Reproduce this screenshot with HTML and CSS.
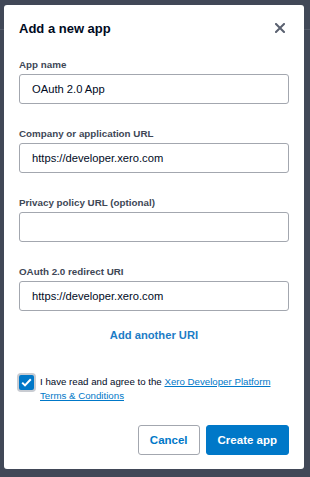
FILE: index.html
```html
<!DOCTYPE html>
<html lang="en">
<head>
    <meta charset="UTF-8">
    <meta name="viewport" content="width=device-width, initial-scale=1.0">
    <title>Add a new app</title>
    <link rel="stylesheet" href="styles.css">
</head>
<body>
    <div class="page-header"></div>

    <div class="modal">
        <div class="modal-header">
            <h1>Add a new app</h1>
            <button class="close-btn" aria-label="Close">
                <svg width="10" height="10" viewBox="0 0 10 10">
                    <path d="M1 1 L9 9 M9 1 L1 9" stroke="#5a6170" stroke-width="2" stroke-linecap="square"/>
                </svg>
            </button>
        </div>

        <div class="field">
            <label for="app-name">App name</label>
            <input id="app-name" type="text" value="OAuth 2.0 App">
        </div>

        <div class="field">
            <label for="company-url">Company or application URL</label>
            <input id="company-url" type="text" value="https://developer.xero.com">
        </div>

        <div class="field">
            <label for="privacy-url">Privacy policy URL (optional)</label>
            <input id="privacy-url" type="text" value="">
        </div>

        <div class="field">
            <label for="redirect-uri">OAuth 2.0 redirect URI</label>
            <input id="redirect-uri" type="text" value="https://developer.xero.com">
        </div>

        <button class="link-btn">Add another URI</button>

        <div class="agree">
            <span class="checkbox">
                <svg width="11" height="9" viewBox="0 0 11 9">
                    <path d="M1.2 4.6 L4 7.4 L9.8 1.3" stroke="#fff" stroke-width="2" fill="none"/>
                </svg>
            </span>
            <p>I have read and agree to the <a href="#">Xero Developer Platform Terms &amp; Conditions</a></p>
        </div>

        <div class="actions">
            <button class="btn btn-secondary">Cancel</button>
            <button class="btn btn-primary">Create app</button>
        </div>
    </div>
</body>
</html>
```

FILE: styles.css
```css
body {
    margin: 0;
    padding: 0;
    height: 477px;
    font-family: 'Liberation Sans', Arial, sans-serif;
    background: #414857;
    overflow: hidden;
}

.page-header {
    height: 29px;
    border-bottom: 1px solid #535a68;
}

.modal {
    position: fixed;
    top: 5px;
    left: 4px;
    width: 300px;
    height: 464px;
    box-sizing: border-box;
    padding: 0 15px;
    background: #fff;
    border-radius: 3px;
}

.modal-header {
    display: flex;
    justify-content: space-between;
    align-items: center;
    height: 46px;
}

.modal-header h1 {
    margin: 0;
    font-size: 13px;
    font-weight: bold;
    color: #000a1e;
}

.close-btn {
    display: flex;
    padding: 0;
    margin-right: 4px;
    border: none;
    background: none;
    cursor: pointer;
}

.field {
    display: flex;
    flex-direction: column;
    margin-top: 8px;
}

.field + .field {
    margin-top: 24px;
}

.field label {
    font-size: 9.8px;
    font-weight: bold;
    color: #404756;
    line-height: 12px;
    margin-bottom: 3px;
}

.field input {
    height: 30px;
    box-sizing: border-box;
    border: 1px solid #a3a7af;
    border-radius: 3px;
    padding: 0 12px;
    font-family: inherit;
    font-size: 11.2px;
    color: #000a1e;
}

.link-btn {
    display: block;
    height: 14px;
    margin: 17px auto 0;
    padding: 0;
    border: none;
    background: none;
    font-family: inherit;
    font-size: 11.2px;
    font-weight: bold;
    color: #1c7cc6;
    cursor: pointer;
}

.agree {
    display: flex;
    align-items: flex-start;
    margin-top: 33px;
}

.checkbox {
    display: flex;
    justify-content: center;
    align-items: center;
    flex-shrink: 0;
    width: 15px;
    height: 15px;
    background: #0078c8;
    border-radius: 2px;
    box-shadow: 0 0 0 2px #c9ccd2;
    margin-right: 6px;
}

.agree p {
    margin: 0;
    font-size: 9.7px;
    line-height: 14px;
    color: #000a1e;
}

.agree a {
    color: #0078c8;
}

.actions {
    display: flex;
    justify-content: flex-end;
    gap: 6px;
    margin-top: 22px;
}

.btn {
    height: 30px;
    padding: 0 11px;
    border-radius: 3px;
    font-family: inherit;
    font-size: 11.5px;
    font-weight: bold;
    cursor: pointer;
}

.btn-secondary {
    background: #fff;
    border: 1px solid #a3a7af;
    color: #0078c8;
}

.btn-primary {
    background: #0078c8;
    border: 1px solid #0078c8;
    color: #fff;
}
```
